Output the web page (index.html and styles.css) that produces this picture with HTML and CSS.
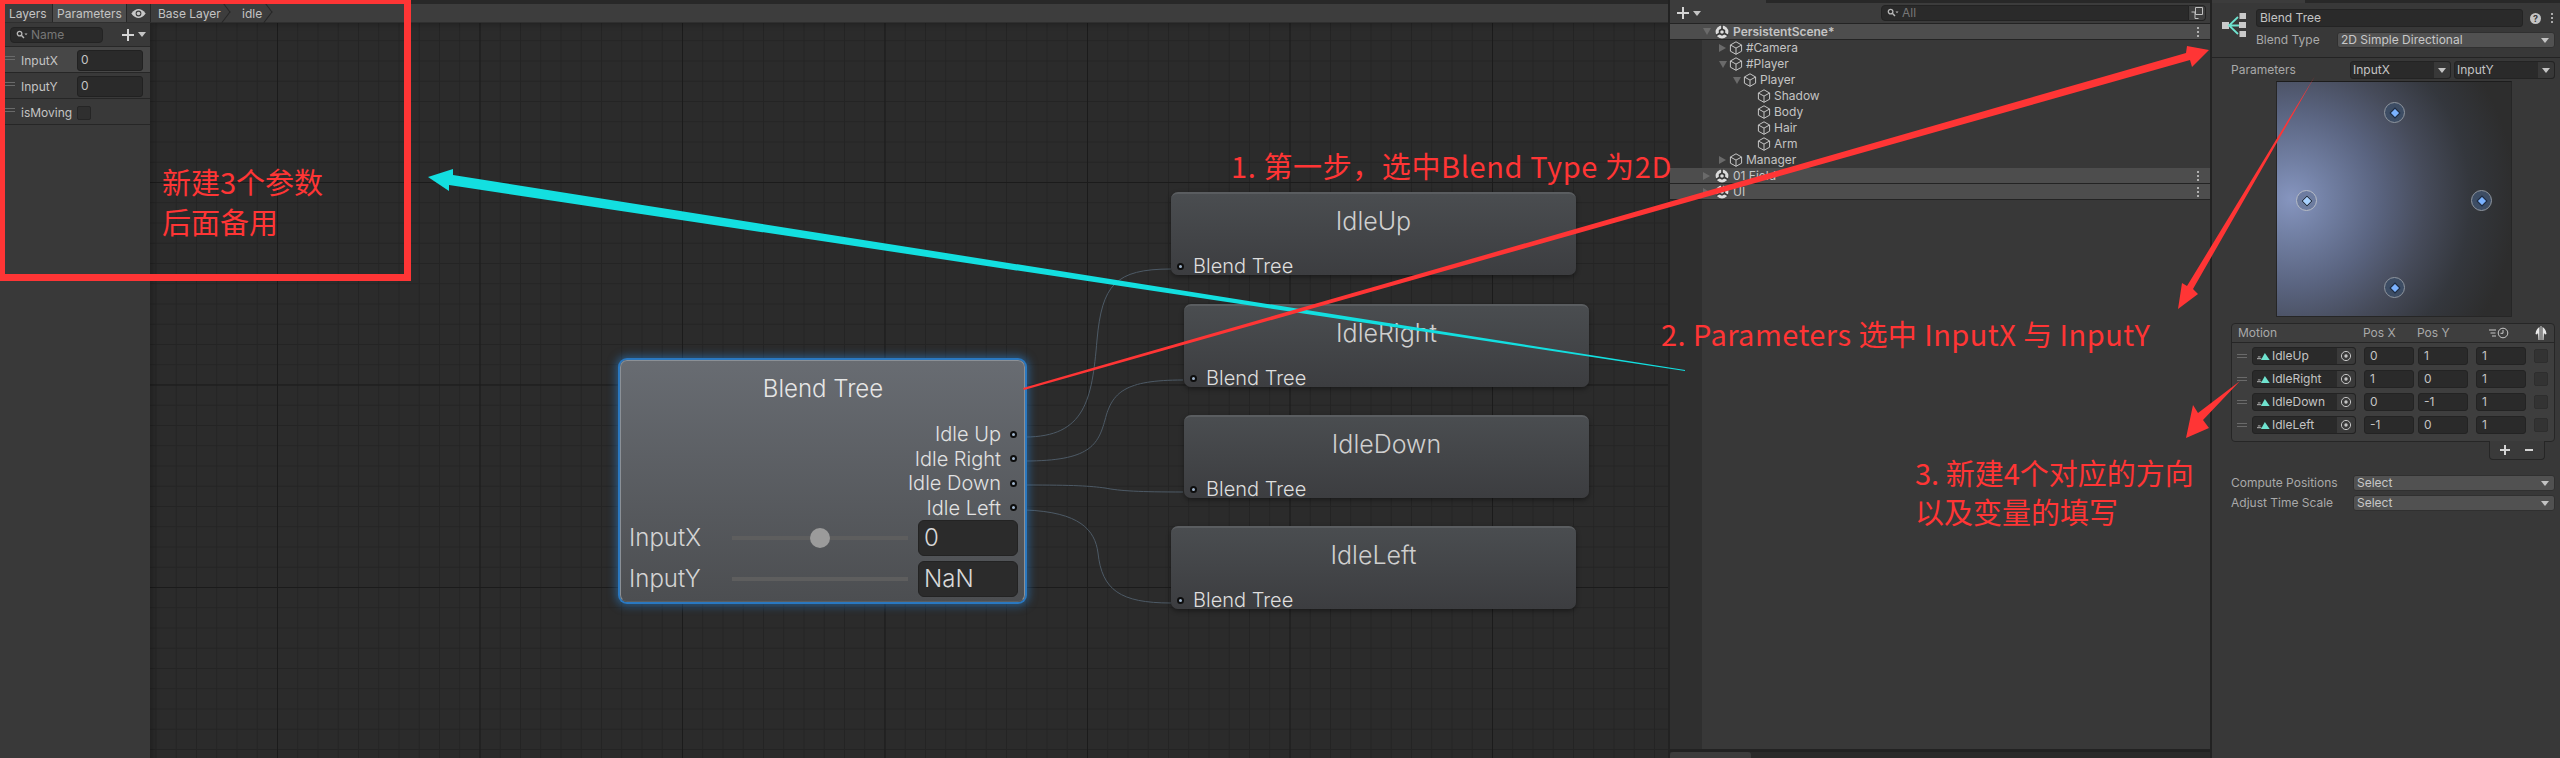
FILE: index.html
```html
<!DOCTYPE html>
<html lang="zh-CN">
<head>
<meta charset="utf-8">
<title>Blend Tree</title>
<link rel="stylesheet" href="styles.css">
</head>
<body>
<svg class="defs" width="0" height="0" aria-hidden="true">
  <symbol id="cube" viewBox="0 0 14 14"><path d="M7 .8 12.6 4v6.2L7 13.3 1.4 10.2V4ZM1.4 4 7 7.1 12.6 4M7 7.1v6.2" fill="none" stroke="#c6c6c6" stroke-width="1"/></symbol>
  <symbol id="unity" viewBox="0 0 14 14"><circle cx="7" cy="7" r="6.4" fill="#dcdcdc"/><path d="M7 7V0M7 7 1 10.5M7 7l6 3.5" stroke="#383838" stroke-width="1.6"/><path d="M7 3.2 3.8 5v4L7 10.8 10.2 9V5Z" fill="#383838"/><path d="M7 5.2 5.4 6.1v1.8L7 8.8l1.6-.9V6.1Z" fill="#dcdcdc"/></symbol>
  <symbol id="search" viewBox="0 0 12 10"><circle cx="3.6" cy="3.6" r="2.3" fill="none" stroke="#b8b8b8" stroke-width="1.3"/><path d="M5.3 5.3 8 8" stroke="#b8b8b8" stroke-width="1.5"/><path d="M8.5 3.5h3L10 5.2Z" fill="#b8b8b8"/></symbol>
  <symbol id="clip" viewBox="0 0 16 10"><path d="M0 7.5h5M1 5.5h3" stroke="#c8c8c8" stroke-width="1"/><path d="M9 1 14.500 9H4.500Z" fill="#6fe3cf"/></symbol>
  <symbol id="target" viewBox="0 0 12 12"><circle cx="6" cy="6" r="4.600" fill="none" stroke="#c4c4c4" stroke-width="1"/><circle cx="6" cy="6" r="1.700" fill="#c4c4c4"/></symbol>
</svg>

<div class="app">
  <section class="animator">
    <header class="anim-bar">
      <span class="tab">Layers</span>
      <span class="tab tab-on">Parameters</span>
      <span class="eye-tab"><svg class="eye" viewBox="0 0 16 10"><path d="M0 5C3 1 5.500 0 8 0s5 1 8 5c-3 4-5.500 5-8 5s-5-1-8-5Z" fill="#c8c8c8"/><circle cx="8" cy="5" r="3.200" fill="#3c3c3c"/><circle cx="8" cy="5" r="2" fill="#c8c8c8"/></svg></span>
      <span class="crumb">Base Layer</span>
      <span class="crumb crumb-last">idle</span>
    </header>
    <div class="anim-body">
      <aside class="params">
        <div class="params-tools">
          <div class="search-pill"><svg class="ico-search"><use href="#search"/></svg><span class="hint">Name</span></div>
          <span class="plus"></span><span class="caret"></span>
        </div>
        <div class="param param-on"><span class="grip"></span><span class="param-name">InputX</span><span class="param-val">0</span></div>
        <div class="param"><span class="grip"></span><span class="param-name">InputY</span><span class="param-val">0</span></div>
        <div class="param"><span class="grip"></span><span class="param-name">isMoving</span><span class="param-check"></span></div>
      </aside>
      <main class="canvas">
        <svg class="wires" viewBox="150 23 1518 735">
          <g fill="none" stroke="#4d5a66" stroke-width="1">
            <path d="M1025 437C1085 437 1092 400 1097 340 1102 285 1115 269 1171 269"/>
            <path d="M1025 461C1090 461 1098 445 1105 420 1112 392 1125 380 1183 380"/>
            <path d="M1025 485C1075 485 1090 486 1105 488 1120 491 1140 492 1183 492"/>
            <path d="M1025 510C1080 512 1095 530 1098 553 1102 590 1120 603 1171 603"/>
          </g>
        </svg>
        <article class="node blend">
          <h2 class="blend-title">Blend Tree</h2>
          <div class="outs">
            <div class="out"><span>Idle Up</span><i class="port"></i></div>
            <div class="out"><span>Idle Right</span><i class="port"></i></div>
            <div class="out"><span>Idle Down</span><i class="port"></i></div>
            <div class="out"><span>Idle Left</span><i class="port"></i></div>
          </div>
          <div class="slide"><span class="slide-name">InputX</span><span class="track"><b class="thumb"></b></span><span class="slide-val">0</span></div>
          <div class="slide"><span class="slide-name">InputY</span><span class="track"></span><span class="slide-val">NaN</span></div>
        </article>
        <article class="node state n-up"><h3 class="state-title">IdleUp</h3><div class="state-in"><i class="port"></i><span>Blend Tree</span></div></article>
        <article class="node state n-right"><h3 class="state-title">IdleRight</h3><div class="state-in"><i class="port"></i><span>Blend Tree</span></div></article>
        <article class="node state n-down"><h3 class="state-title">IdleDown</h3><div class="state-in"><i class="port"></i><span>Blend Tree</span></div></article>
        <article class="node state n-left"><h3 class="state-title">IdleLeft</h3><div class="state-in"><i class="port"></i><span>Blend Tree</span></div></article>
      </main>
    </div>
  </section>

  <section class="hier">
    <div class="strip"><span class="strip-tab"></span></div>
    <div class="hier-tools">
      <span class="plus hier-plus"></span><span class="caret"></span>
      <div class="hier-search"><svg class="ico-search"><use href="#search"/></svg><span class="hint">All</span></div>
      <span class="hier-btn"><svg class="ico-pop" viewBox="0 0 12 12"><path d="M4.500.5h7v7h-7ZM.5 5h3.500v6.500h3.500" fill="none" stroke="#c0c0c0"/></svg></span>
    </div>
    <div class="hier-list">
      <div class="scene"><i class="tri-open"></i><svg class="ico"><use href="#unity"/></svg><strong>PersistentScene*</strong><span class="kebab"></span></div>
      <div class="item d1"><i class="tri"></i><svg class="ico"><use href="#cube"/></svg><span>#Camera</span></div>
      <div class="item d1"><i class="tri-open"></i><svg class="ico"><use href="#cube"/></svg><span>#Player</span></div>
      <div class="item d2"><i class="tri-open"></i><svg class="ico"><use href="#cube"/></svg><span>Player</span></div>
      <div class="item d3"><i class="tri-none"></i><svg class="ico"><use href="#cube"/></svg><span>Shadow</span></div>
      <div class="item d3"><i class="tri-none"></i><svg class="ico"><use href="#cube"/></svg><span>Body</span></div>
      <div class="item d3"><i class="tri-none"></i><svg class="ico"><use href="#cube"/></svg><span>Hair</span></div>
      <div class="item d3"><i class="tri-none"></i><svg class="ico"><use href="#cube"/></svg><span>Arm</span></div>
      <div class="item d1"><i class="tri"></i><svg class="ico"><use href="#cube"/></svg><span>Manager</span></div>
      <div class="scene"><i class="tri"></i><svg class="ico"><use href="#unity"/></svg><span>01 Field</span><span class="kebab"></span></div>
      <div class="scene"><i class="tri"></i><svg class="ico"><use href="#unity"/></svg><span>UI</span><span class="kebab"></span></div>
    </div>
    <div class="hier-bottom"><span class="project-tab"></span></div>
  </section>

  <section class="insp">
    <div class="strip"><span class="strip-tab insp-tab"></span></div>
    <div class="insp-head">
      <svg class="bt-icon" viewBox="0 0 24 24">
        <g fill="#c9c9c9"><rect x="0" y="9" width="7" height="7"/><rect x="17.500" y="0" width="6.500" height="6"/><rect x="17" y="9" width="7" height="6"/><rect x="17.500" y="18" width="6.500" height="6"/></g>
        <path d="M7 12.500h10M16 4 7 12.500 16 21" fill="none" stroke="#6fe3cf" stroke-width="1.800"/>
      </svg>
      <div class="head-fields">
        <div class="name-row"><div class="name-input">Blend Tree</div><span class="help">?</span><span class="kebab"></span></div>
        <div class="type-row"><span class="dim type-label">Blend Type</span><div class="drop">2D Simple Directional<i class="caret"></i></div></div>
      </div>
    </div>
    <div class="params-row">
      <span class="dim params-label">Parameters</span>
      <div class="pick"><span>InputX</span><i class="pick-btn"><b class="caret"></b></i></div>
      <div class="pick"><span>InputY</span><i class="pick-btn"><b class="caret"></b></i></div>
    </div>
    <div class="plot">
      <span class="dot d-up"><i></i></span>
      <span class="dot d-left"><i></i></span>
      <span class="dot d-right"><i></i></span>
      <span class="dot d-down"><i></i></span>
    </div>
    <div class="motion">
      <div class="motion-head">
        <span class="mh-motion">Motion</span><span class="mh-x">Pos X</span><span class="mh-y">Pos Y</span>
        <svg class="mh-speed" viewBox="0 0 20 12"><path d="M0 3h7M1.500 6h5M3 9h4" stroke="#c8c8c8"/><circle cx="14" cy="6" r="4.800" fill="none" stroke="#c8c8c8"/><path d="M14 3v3.300h-2.500" fill="none" stroke="#c8c8c8"/></svg>
        <svg class="mh-mirror" viewBox="0 0 12 14"><path d="M5.500 0v14M6.500 0v14" stroke="#8a8a8a"/><path d="M4.500 1C2.500 2 1 4 .5 8l1.500.5L3 7l.5 7h1ZM7.500 1c2 1 3.500 3 4 7l-1.500.5L9 7l-.5 7h-1Z" fill="#e8e8e8"/></svg>
      </div>
      <div class="motion-rows">
        <div class="mrow"><span class="grip"></span><div class="objf"><svg class="clip"><use href="#clip"/></svg><span class="obj-name">IdleUp</span><i class="obj-btn"><svg class="tgt"><use href="#target"/></svg></i></div><span class="num nx">0</span><span class="num ny">1</span><span class="num nt">1</span><span class="chk"></span></div>
        <div class="mrow"><span class="grip"></span><div class="objf"><svg class="clip"><use href="#clip"/></svg><span class="obj-name">IdleRight</span><i class="obj-btn"><svg class="tgt"><use href="#target"/></svg></i></div><span class="num nx">1</span><span class="num ny">0</span><span class="num nt">1</span><span class="chk"></span></div>
        <div class="mrow"><span class="grip"></span><div class="objf"><svg class="clip"><use href="#clip"/></svg><span class="obj-name">IdleDown</span><i class="obj-btn"><svg class="tgt"><use href="#target"/></svg></i></div><span class="num nx">0</span><span class="num ny">-1</span><span class="num nt">1</span><span class="chk"></span></div>
        <div class="mrow"><span class="grip"></span><div class="objf"><svg class="clip"><use href="#clip"/></svg><span class="obj-name">IdleLeft</span><i class="obj-btn"><svg class="tgt"><use href="#target"/></svg></i></div><span class="num nx">-1</span><span class="num ny">0</span><span class="num nt">1</span><span class="chk"></span></div>
      </div>
    </div>
    <div class="motion-foot"><span class="foot-plus"></span><span class="foot-minus"></span></div>
    <div class="sel-row sel-first"><span class="dim sel-label">Compute Positions</span><div class="drop drop-sel">Select<i class="caret"></i></div></div>
    <div class="sel-row"><span class="dim sel-label">Adjust Time Scale</span><div class="drop drop-sel">Select<i class="caret"></i></div></div>
  </section>

  <div class="callout-box"></div>
  <svg class="arrows" viewBox="0 0 2560 758">
    <polygon fill="#13dfe0" points="428,177 453,169 453,175 1685,370 1685,371 449,185 449,191"/>
    <polygon fill="#ff3535" points="2209,50 2187,46 2186,53 1023,388 1024,390 2190,60 2192,67"/>
    <polygon fill="#ff3535" points="2178,309 2182,283 2187,286 2315,76 2193,289 2198,294"/>
    <polygon fill="#ff3535" points="2186,438 2193,405 2198,413 2240,381 2203,420 2209,428"/>
  </svg>
  <p class="note note-a">新建3个参数<br>后面备用</p>
  <p class="note note-1">1. 第一步，选中Blend Type 为2D</p>
  <p class="note note-2">2. Parameters 选中 InputX 与 InputY</p>
  <p class="note note-3">3. 新建4个对应的方向<br>以及变量的填写</p>
</div>
</body>
</html>
```
FILE: styles.css
```css
* { box-sizing: border-box; }
html, body { margin: 0; height: 100%; background: #282828; overflow: hidden; }
body { font: 12px/16px Inter, "Liberation Sans", sans-serif; color: #c4c4c4; }
.defs { position: absolute; }
h2, h3, p { margin: 0; font-weight: 300; }
i, b { display: block; font-style: normal; }

.app { position: relative; display: flex; width: 2560px; height: 758px; overflow: hidden; }

/* Animator window */
.animator { display: flex; flex-direction: column; width: 1668px; height: 100%; }
.anim-bar { display: flex; align-items: stretch; height: 23px; padding-top: 4px; padding-left: 5px; background: linear-gradient(#282828 4px, #3d3d3d 4px); font-size: 12px; line-height: 19px; border-bottom: 1px solid #2f2f2f; }
.tab { padding: 0 4px; border-right: 1px solid #262626; color: #c4c4c4; width: 48px; }
.tab-on { width: 74px; background: #4d4d4d; }
.eye-tab { display: flex; align-items: center; justify-content: center; width: 24px; border-right: 1px solid #262626; }
.eye { width: 15px; height: 9px; }
.crumb { position: relative; padding: 0 0 0 7px; width: 78px; }
.crumb::after { content: ""; position: absolute; right: 0; top: 1px; width: 13px; height: 13px; border-top: 1px solid #262626; border-right: 1px solid #262626; transform: rotate(45deg) skew(8deg, 8deg); }
.crumb-last { width: 42px; padding-left: 13px; }
.anim-body { display: flex; flex: 1; min-height: 0; }

.params { width: 150px; background: #393939; flex: none; }
.params-tools { display: flex; align-items: center; height: 24px; padding: 0 0 0 10px; border-bottom: 1px solid #282828; }
.search-pill { display: flex; align-items: center; width: 93px; height: 16px; padding-left: 5px; border-radius: 4px; background: #2a2a2a; border: 1px solid #232323; }
.ico-search { width: 12px; height: 10px; margin-right: 3px; flex: none; }
.hint { color: #777; font-size: 12px; }
.plus { width: 12px; height: 12px; margin-left: 19px; flex: none; background: linear-gradient(#d4d4d4, #d4d4d4) center / 12px 2px no-repeat, linear-gradient(#d4d4d4, #d4d4d4) center / 2px 12px no-repeat; }
.caret { width: 0; height: 0; border-left: 4px solid transparent; border-right: 4px solid transparent; border-top: 5px solid #c4c4c4; margin-left: 4px; flex: none; }
.param { display: flex; align-items: center; height: 26px; padding: 2px 0 0 5px; border-bottom: 1px solid #262626; }
.param-on { background: #474747; }
.grip { width: 10px; height: 4px; border-top: 1px solid #6a6a6a; border-bottom: 1px solid #6a6a6a; flex: none; }
.param .grip { align-self: flex-start; margin-top: 7px; }
.param-name { width: 62px; padding-left: 6px; }
.param-val { width: 66px; height: 21px; line-height: 17px; padding-left: 3px; background: #2a2a2a; border: 1px solid #212121; border-radius: 3px; }
.param-check { width: 14px; height: 14px; background: #2f2f2f; border: 1px solid #252525; border-radius: 2px; }

/* Graph canvas */
.canvas {
  position: relative; flex: 1; overflow: hidden; background-color: #2b2b2b;
  background-image:
    linear-gradient(to right, #1b1b1b 1px, transparent 1px),
    linear-gradient(to bottom, #1b1b1b 1px, transparent 1px),
    linear-gradient(to right, #242424 1px, transparent 1px),
    linear-gradient(to bottom, #242424 1px, transparent 1px);
  background-size: 202.5px 100%, 100% 202.5px, 20.25px 100%, 100% 20.25px;
  background-position: 127px 0, 0 159px, 127px 0, 0 159px;
  box-shadow: inset 6px 4px 6px -3px rgba(0,0,0,.25);
}
.wires { position: absolute; inset: 0; width: 100%; height: 100%; }
.node { position: absolute; border-radius: 7px; }
.port { width: 7px; height: 7px; border-radius: 50%; background: #9fb4cc; border: 2px solid #0d0d0d; flex: none; }

.blend { left: 470px; top: 337px; width: 405px; height: 242px; padding: 0 7px 0 8px; background: linear-gradient(#686c72, #4c4e51); border: 1px solid #8b9096; border-bottom-color: #5a5d60; box-shadow: 0 0 0 2px #2a78c0, 0 0 8px 4px rgba(42,120,192,.6); }
.blend-title { margin-top: 14px; height: 28px; font-size: 24px; line-height: 28px; text-align: center; color: #e6e6e6; }
.outs { margin-top: 19px; }
.out { display: flex; align-items: center; justify-content: flex-end; height: 24.5px; font-size: 20px; font-weight: 300; color: #e2e2e2; }
.out .port { margin: 0 0 0 9px; }
.slide { display: flex; align-items: center; height: 36px; margin-top: 5px; font-size: 24px; font-weight: 300; color: #d4d4d4; }
.outs + .slide { margin-top: 0; }
.slide-name { width: 103px; flex: none; }
.track { position: relative; width: 176px; height: 4px; background: #5e5e5e; flex: none; }
.thumb { position: absolute; left: 78px; top: -8px; width: 20px; height: 20px; border-radius: 50%; background: #9b9b9b; }
.slide-val { width: 100px; height: 36px; margin-left: 10px; padding-left: 5px; line-height: 34px; background: #2b2b2b; border: 1px solid #232323; border-radius: 6px; font-size: 24px; color: #d8d8d8; flex: none; }

.state { width: 405px; height: 83px; background: linear-gradient(#4a4d50, #3c3d40); border-top: 2px solid #5a5d60; box-shadow: 0 2px 5px rgba(0,0,0,.4); display: flex; flex-direction: column; }
.n-up { left: 1021px; top: 169px; }
.n-right { left: 1034px; top: 281px; }
.n-down { left: 1034px; top: 392px; }
.n-left { left: 1021px; top: 503px; }
.state-title { height: 28px; margin-top: 13px; font-size: 25px; line-height: 28px; text-align: center; color: #cfcfcf; }
.state-in { display: flex; align-items: center; height: 20px; margin-top: 21px; padding-left: 6px; font-size: 20px; line-height: 20px; font-weight: 300; color: #dedede; }
.state-in .port { margin-right: 9px; }

/* Hierarchy */
.hier { display: flex; flex-direction: column; width: 544px; height: 100%; padding: 0 2px; background: #222; flex: none; }
.strip { height: 3px; background: #282828; flex: none; }
.strip-tab { display: block; width: 96px; height: 3px; background: #3c3c3c; }
.hier-tools { display: flex; align-items: center; height: 21px; padding-left: 7px; background: #3c3c3c; border-bottom: 1px solid #232323; flex: none; }
.hier-plus { margin-left: 0; }
.hier-search { display: flex; align-items: center; width: 308px; height: 16px; margin-left: 180px; padding-left: 5px; background: #2a2a2a; border: 1px solid #232323; border-radius: 4px 0 0 4px; }
.hier-btn { display: flex; align-items: center; justify-content: center; width: 17px; height: 16px; background: #3f3f3f; border: 1px solid #232323; border-left: 0; border-radius: 0 4px 4px 0; }
.ico-pop { width: 12px; height: 12px; }
.hier-list { flex: 1; background: linear-gradient(to right, #2f2f2f 32px, #383838 32px); }
.scene { display: flex; align-items: center; height: 16px; padding-left: 33px; background: #4d4d4d; border-bottom: 1px solid #232323; color: #c8c8c8; }
.scene strong { font-weight: 600; color: #c4c4c4; }
.kebab { margin-left: auto; margin-right: 11px; width: 2px; height: 2px; background: #d0d0d0; box-shadow: 0 -4px #d0d0d0, 0 4px #d0d0d0; border-radius: 50%; flex: none; }
.ico { width: 14px; height: 14px; margin-right: 4px; flex: none; }
.scene .ico { margin-left: 4px; }
.tri, .tri-open, .tri-none { width: 8px; height: 8px; flex: none; }
.tri { border-left: 7px solid #6a6a6a; border-top: 4px solid transparent; border-bottom: 4px solid transparent; }
.tri-open { border-top: 7px solid #6a6a6a; border-left: 4px solid transparent; border-right: 4px solid transparent; height: 7px; }
.item { display: flex; align-items: center; height: 16px; }
.item .ico { margin: 0 3px 0 2px; }
.d1 { padding-left: 49px; }
.d2 { padding-left: 63px; }
.d3 { padding-left: 77px; }
.hier-bottom { height: 6px; margin-top: 3px; background: #2a2a2a; flex: none; }
.project-tab { display: block; width: 81px; height: 6px; background: #3c3c3c; border-radius: 3px 3px 0 0; }

/* Inspector */
.insp { width: 348px; height: 100%; background: #383838; flex: none; }
.insp-tab { width: 93px; }
.insp-head { display: flex; align-items: flex-start; padding: 6px 5px 9px 10px; border-bottom: 1px solid #232323; }
.bt-icon { width: 24px; height: 24px; margin: 4px 10px 0 0; flex: none; }
.head-fields { flex: 1; }
.name-row { display: flex; align-items: center; height: 18px; }
.name-input { width: 267px; height: 18px; padding-left: 3px; background: #2a2a2a; border: 1px solid #232323; border-radius: 3px; }
.help { width: 11px; height: 11px; margin-left: 7px; border-radius: 50%; background: #c4c4c4; color: #383838; font-size: 9px; line-height: 11px; font-weight: 700; text-align: center; }
.name-row .kebab { margin-right: 2px; }
.type-row { display: flex; align-items: center; height: 16px; margin-top: 5px; }
.dim { color: #a9a9a9; }
.type-label { width: 81px; flex: none; }
.drop { display: flex; align-items: center; flex: 1; height: 16px; padding-left: 3px; background: #515151; border: 1px solid #303030; border-radius: 3px; color: #c8c8c8; }
.drop .caret { margin-left: auto; margin-right: 5px; }
.params-row { display: flex; align-items: center; height: 18px; margin-top: 3px; padding: 0 5px 0 19px; }
.params-label { width: 119px; flex: none; }
.pick { display: flex; align-items: center; width: 101px; height: 18px; padding-left: 2px; background: #2a2a2a; border: 1px solid #232323; border-radius: 3px; }
.pick + .pick { margin-left: 3px; }
.pick-btn { display: flex; align-items: center; justify-content: center; width: 16px; height: 100%; margin-left: auto; background: #383838; border-radius: 0 3px 3px 0; }
.pick-btn .caret { margin: 0; }
.plot { position: relative; width: 236px; height: 236px; margin: 2px 0 0 64px; border: 1px solid #262626; border-top-color: #1c1c1c; background: radial-gradient(circle at 6% 50%, #8695bf 0, #7381a5 14%, #5a6480 35%, #464b5a 54%, #34373d 72%, #2d2d2d 90%); }
.dot { position: absolute; display: flex; align-items: center; justify-content: center; width: 21px; height: 21px; border-radius: 50%; background: #3d4d64; border: 1px solid #8f969f; }
.dot i { width: 6px; height: 6px; background: #7ab2ff; transform: rotate(45deg); outline: 1px solid #1c2a40; }
.d-up { left: 107px; top: 20px; }
.d-left { left: 19px; top: 108px; background: #6d7ca0; border-color: #b8bdc6; }
.d-left i { background: #a8d2ff; outline-color: #1c2a40; box-shadow: 0 0 0 1px #e0e8f4; }
.d-right { left: 194px; top: 108px; }
.d-down { left: 107px; top: 195px; }

.motion { margin: 6px 5px 0 19px; background: #3e3e3e; border: 1px solid #262626; border-radius: 4px; height: 119px; }
.motion-head { display: flex; align-items: center; height: 19px; border-bottom: 1px solid #262626; color: #a9a9a9; }
.mh-motion { margin-left: 6px; width: 125px; }
.mh-x { width: 54px; }
.mh-y { width: 72px; }
.mh-speed { width: 20px; height: 12px; }
.mh-mirror { width: 12px; height: 14px; margin-left: 26px; }
.motion-rows { display: flex; flex-direction: column; gap: 5px; padding-top: 4px; }
.mrow { display: flex; align-items: center; height: 18px; padding-left: 5px; }
.objf { display: flex; align-items: center; width: 104px; height: 18px; margin-left: 5px; background: #2a2a2a; border: 1px solid #232323; border-radius: 3px; }
.clip { width: 14px; height: 9px; margin-left: 4px; flex: none; }
.obj-name { margin-left: 1px; }
.obj-btn { display: flex; align-items: center; justify-content: center; width: 18px; height: 100%; margin-left: auto; background: #3a3a3a; border-radius: 0 3px 3px 0; }
.tgt { width: 12px; height: 12px; }
.num { width: 50px; height: 18px; padding-left: 5px; background: #2a2a2a; border: 1px solid #232323; border-radius: 3px; }
.nx { margin-left: 8px; }
.ny { margin-left: 4px; }
.nt { margin-left: 8px; }
.chk { width: 14px; height: 14px; margin-left: 8px; background: #333; border: 1px solid #2e2e2e; border-radius: 2px; }
.motion-foot { display: flex; align-items: center; width: 56px; height: 19px; margin: -1px 15px 0 auto; padding-left: 10px; background: #3a3a3a; border: 1px solid #262626; border-top: 0; border-radius: 0 0 4px 4px; }
.foot-plus { width: 10px; height: 10px; background: linear-gradient(#d4d4d4, #d4d4d4) center / 10px 2px no-repeat, linear-gradient(#d4d4d4, #d4d4d4) center / 2px 10px no-repeat; }
.foot-minus { width: 8px; height: 2px; margin-left: 15px; background: #d4d4d4; }
.sel-row { display: flex; align-items: center; height: 16px; margin-top: 4px; padding: 0 5px 0 19px; }
.sel-first { margin-top: 15px; }
.sel-label { width: 122px; flex: none; }

/* Annotations */
.callout-box { position: absolute; left: 0; top: 0; width: 411px; height: 281px; border: solid #ff3535; border-width: 4px 7px 7px 5px; }
.arrows { position: absolute; inset: 0; width: 2560px; height: 758px; pointer-events: none; }
.note { position: absolute; font: 400 29px/40px "Noto Sans CJK SC", Inter, sans-serif; color: #ff3535; white-space: nowrap; }
.note-a { left: 162px; top: 161px; }
.note-1 { left: 1231px; top: 145px; letter-spacing: .6px; }
.note-2 { left: 1661px; top: 313px; letter-spacing: .45px; }
.note-3 { left: 1915px; top: 453px; line-height: 39px; }
```
